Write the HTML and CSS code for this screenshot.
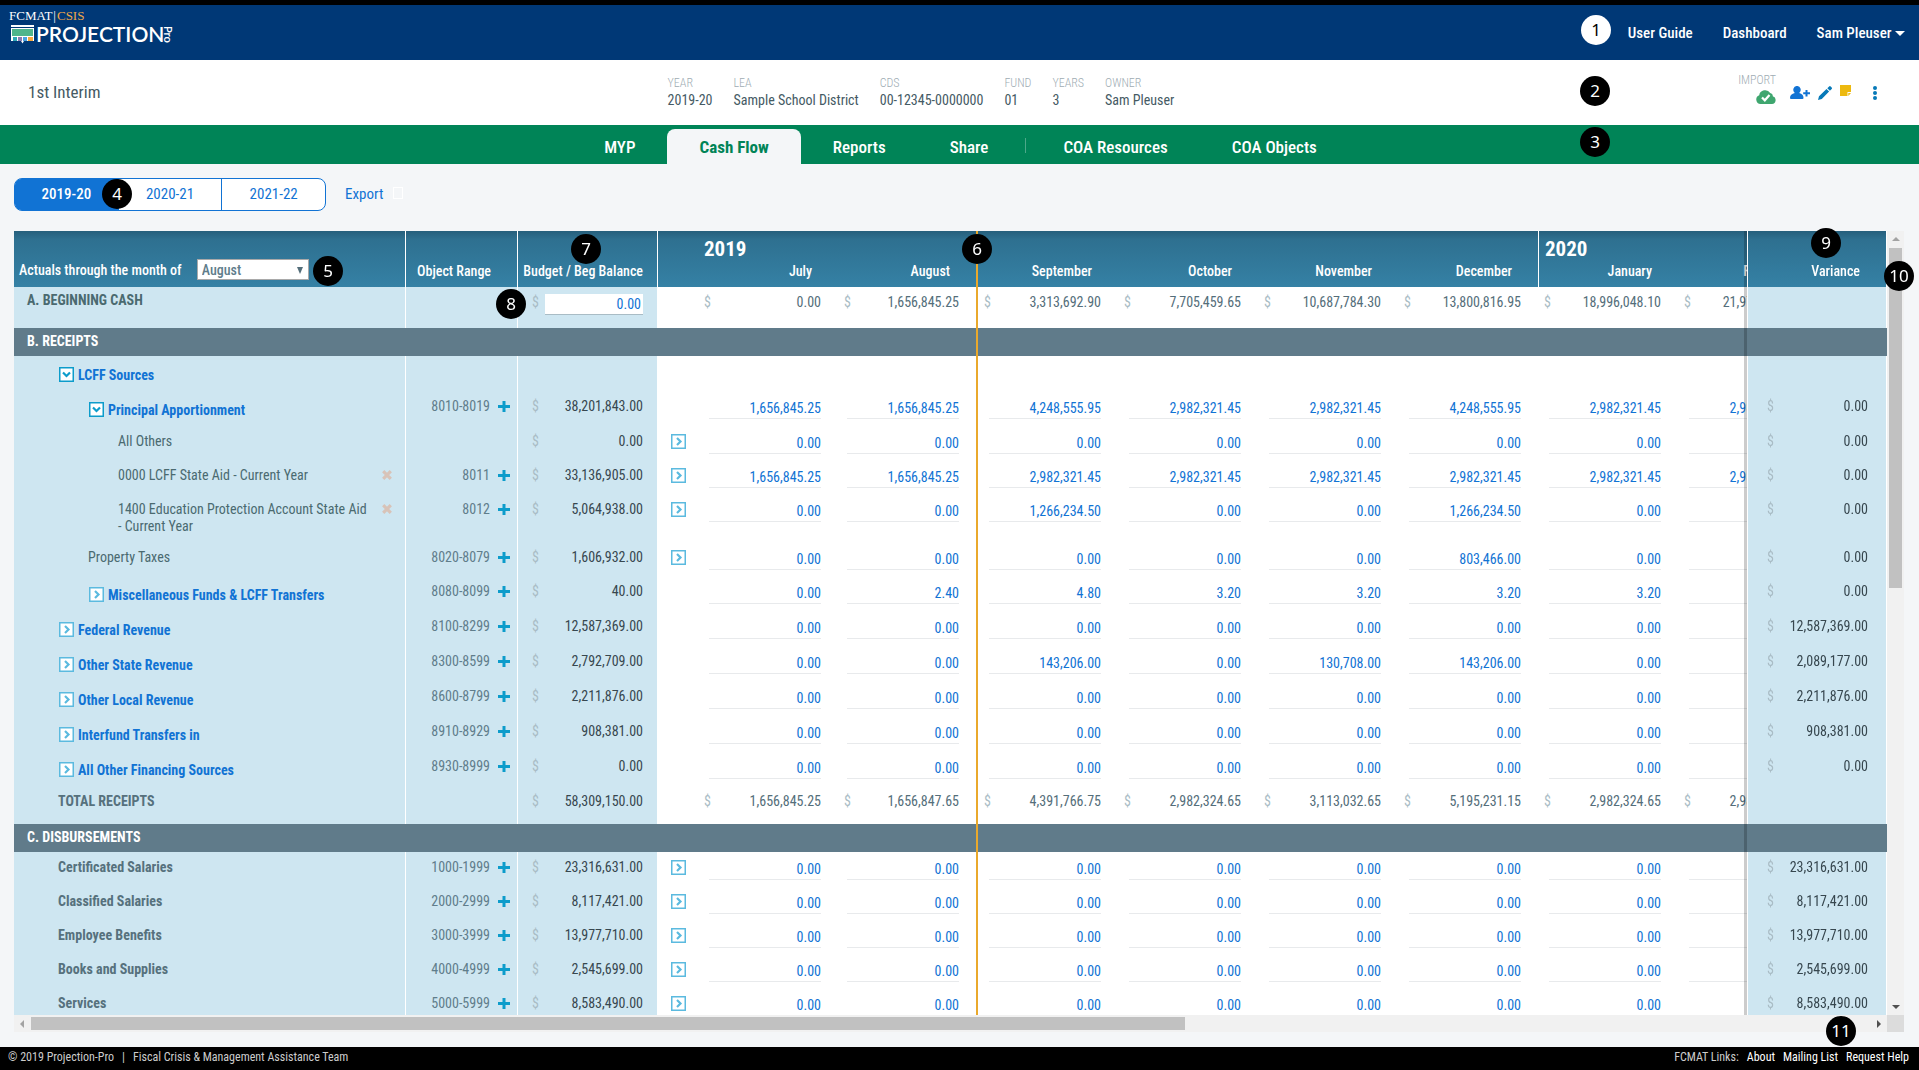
FILE: index.html
```html
<!DOCTYPE html>
<html lang="en">
<head>
    <meta charset="UTF-8">
    <meta name="viewport" content="width=device-width, initial-scale=1.0">
    <title>Projection-Pro - Cash Flow</title>

    <link rel="stylesheet" href="styles.css">
</head>
<body>
    <header class="topbar">
        <a href="#" class="logo">
            <span class="logo-org">FCMAT<span class="logo-bar">|</span><span class="logo-csis">CSIS</span></span>
            <span class="logo-name">
                <svg width="23" height="19" viewBox="0 0 23 19">
                    <path fill="#fff" d="M0 0h23v2H0zM0 3h23v13H13l-1.500 2.500L10 16H0z"/>
                    <path fill="#4fb58b" d="M1 4h21v7H1z"/>
                    <path fill="#2fa8b5" d="M2 12h4v4H2z"/>
                    <path fill="#8d7bb0" d="M7 12h4v4H7z"/>
                    <path fill="#4aa3e0" d="M12 12h4v4h-4z"/>
                    <path fill="#f6a83c" d="M17 12h5v4h-5z"/>
                </svg>
                <span class="logo-word">PROJECTION</span><span class="logo-pro">Pro</span>
            </span>
        </a>
        <nav class="top-links">
            <span class="badge badge-light badge-1">1</span>
            <a href="#">User Guide</a>
            <a href="#">Dashboard</a>
            <a href="#">Sam Pleuser <span class="caret"></span></a>
        </nav>
    </header>

    <section class="info">
        <h1>1st Interim</h1>
        <dl class="facts">
            <div><dt>YEAR</dt><dd>2019-20</dd></div>
            <div><dt>LEA</dt><dd>Sample School District</dd></div>
            <div><dt>CDS</dt><dd>00-12345-0000000</dd></div>
            <div><dt>FUND</dt><dd>01</dd></div>
            <div><dt>YEARS</dt><dd>3</dd></div>
            <div><dt>OWNER</dt><dd>Sam Pleuser</dd></div>
        </dl>
        <div class="actions">
            <div class="import">
                <span>IMPORT</span>
                <svg width="20" height="14" viewBox="0 0 20 14">
                    <path fill="#3fa66f" d="M4.500 14A4.500 4.500 0 0 1 3.200 5.300 6 6 0 0 1 14.200 3 3 3 0 0 1 16.800 6.200 4 4 0 0 1 16 14z"/>
                    <path fill="none" stroke="#fff" stroke-width="2.200" d="M6 7.500l2.800 2.800L13.500 5"/>
                </svg>
            </div>
            <button type="button" class="icon" aria-label="Share with user">
                <svg width="20" height="13" viewBox="0 0 20 13">
                    <path fill="#1173d4" d="M7 0a3.500 3.800 0 0 1 2.200 6.900C12 7.500 13.500 9 13.500 12q0 1-1 1H1q-1 0-1-1c0-3 1.800-4.500 4.800-5.100A3.500 3.800 0 0 1 7 0zM15.500 4h2v2.200H20v2h-2.500v2.300h-2V8.200h-2.300v-2h2.300z"/>
                </svg>
            </button>
            <button type="button" class="icon" aria-label="Edit">
                <svg width="14" height="14" viewBox="0 0 14 14">
                    <path fill="#0779b8" d="M8.500 3l2.600 2.600L3.800 13 0 14l1-3.700zM9.300 2.200l1.800-1.800q.8-.7 1.600 0l1 1q.6.800 0 1.600l-1.800 1.800z"/>
                </svg>
            </button>
            <button type="button" class="icon note" aria-label="Notes">
                <svg width="11" height="11" viewBox="0 0 11 11">
                    <path fill="#edb90f" d="M0 0h11v7H7.500v4H0zM8.300 8H11l-2.700 3z"/>
                </svg>
            </button>
            <button type="button" class="icon more" aria-label="More">
                <svg width="4" height="14" viewBox="0 0 4 14">
                    <g fill="#0779b8"><circle cx="2" cy="2" r="2"/><circle cx="2" cy="7" r="2"/><circle cx="2" cy="12" r="2"/></g>
                </svg>
            </button>
        </div>
        <span class="badge badge-2">2</span>
    </section>

    <nav class="tabs">
        <a href="#">MYP</a>
        <a href="#" class="active">Cash Flow</a>
        <a href="#">Reports</a>
        <a href="#">Share</a>
        <span class="tab-divider"></span>
        <a href="#">COA Resources</a>
        <a href="#">COA Objects</a>
        <span class="badge badge-3">3</span>
    </nav>

    <div class="toolbar">
        <div class="years">
            <button type="button" class="selected">2019-20</button>
            <button type="button">2020-21</button>
            <button type="button">2021-22</button>
            <span class="badge badge-4">4</span>
        </div>
        <a href="#" class="export">Export</a>
    </div>

    <main class="sheet">
        <div class="grid">
            <table>
                <colgroup>
                    <col class="col-name"><col class="col-range"><col class="col-budget"><col class="col-expand">
                    <col span="8" class="col-amount"><col class="col-amount">
                </colgroup>
                <thead>
                    <tr>
                        <th class="month-picker">
                            <label for="actuals-month">Actuals through the month of</label>
                            <span class="select">
                                <select id="actuals-month"><option>August</option></select>
                            </span>
                        </th>
                        <th class="range">Object Range</th>
                        <th class="budget">Budget / Beg Balance</th>
                        <th></th>
                        <th class="month"><strong>2019</strong>July</th>
                        <th class="month actuals-end">August</th>
                        <th class="month">September</th>
                        <th class="month">October</th>
                        <th class="month">November</th>
                        <th class="month">December</th>
                        <th class="month new-year"><strong>2020</strong>January</th>
                        <th class="month">February</th>
                        <th class="variance">Variance</th>
                    </tr>
                </thead>
                <tbody id="rows"></tbody>
            </table>
        </div>
        <div class="vscroll"><i class="arrow up"></i><div class="thumb"></div><i class="arrow down"></i></div>
        <div class="hscroll"><i class="arrow left"></i><div class="thumb"></div><i class="arrow right"></i></div>
        <div class="corner"></div>
        <span class="badge badge-5">5</span>
        <span class="badge badge-6">6</span>
        <span class="badge badge-7">7</span>
        <span class="badge badge-8">8</span>
        <span class="badge badge-9">9</span>
        <span class="badge badge-10">10</span>
        <span class="badge badge-11">11</span>
    </main>

    <footer>
        <span>© 2019 Projection-Pro</span>
        <span class="pipe">|</span>
        <span>Fiscal Crisis &amp; Management Assistance Team</span>
        <nav>
            <span>FCMAT Links:</span>
            <a href="#">About</a>
            <a href="#">Mailing List</a>
            <a href="#">Request Help</a>
        </nav>
    </footer>

    <script src="script.js"></script>
</body>
</html>
```
FILE: styles.css
```css
* {
    box-sizing: border-box;
}

body {
    display: flex;
    flex-direction: column;
    height: 100vh;
    margin: 0;
    border-top: 5px solid #000;
    background: #f4f6f8;
    color: #455a64;
    font-family: "Roboto Condensed", Roboto, sans-serif;
    font-size: 14px;
    line-height: 17px;
}

a {
    color: inherit;
    text-decoration: none;
}

button,
input,
select {
    font: inherit;
}

button {
    padding: 0;
    border: none;
    background: none;
    cursor: pointer;
}

/* top bar */
.topbar {
    display: flex;
    justify-content: space-between;
    height: 55px;
    padding: 3px 14px 0 9px;
    background: #003876;
    color: #fff;
}

.logo-org {
    display: block;
    height: 15px;
    font: 13px/16px "Liberation Serif", serif;
}

.logo-bar {
    margin: 0 1px;
}

.logo-csis {
    color: #f0a848;
}

.logo-name {
    display: flex;
    align-items: center;
    height: 22px;
    padding-left: 2px;
}

.logo-word {
    margin-left: 2px;
    font: 600 21px/22px Lato, sans-serif;
}

.logo-pro {
    font: 600 11px/9px Lato, sans-serif;
    writing-mode: vertical-rl;
}

.top-links {
    position: relative;
    display: flex;
    align-items: center;
    gap: 30px;
    padding-bottom: 2px;
    font-size: 15px;
    font-weight: 500;
}

.caret {
    display: inline-block;
    border: 5px solid transparent;
    border-top: 5px solid #fff;
    border-bottom: none;
    vertical-align: 2px;
}

/* projection info */
.info {
    position: relative;
    display: flex;
    align-items: center;
    height: 65px;
    padding: 0 42px 0 28px;
    background: #fff;
}

.info h1 {
    flex: 0 0 33.33vw;
    margin: 0;
    font-size: 17px;
    font-weight: 400;
}

.facts {
    display: flex;
    gap: 21px;
    margin: 0;
    padding-bottom: 2px;
}

.facts dt,
.import {
    color: #9eacb3;
    font-size: 12px;
    font-weight: 300;
}

.facts dd {
    margin: 0;
}

.actions {
    flex: 1;
    display: flex;
    justify-content: flex-end;
    align-items: center;
}

.import {
    display: flex;
    flex-direction: column;
    align-items: flex-end;
    gap: 1px;
    padding-bottom: 9px;
}

.icon {
    display: flex;
    margin-left: 14px;
}

.icon + .icon {
    margin-left: 8px;
}

.icon.note {
    padding-bottom: 5px;
}

.icon.more {
    margin-left: 22px;
}

/* tabs */
.tabs {
    position: relative;
    display: flex;
    justify-content: center;
    align-items: flex-end;
    height: 39px;
    padding-left: 2px;
    background: #008457;
    color: #fff;
    font-size: 17px;
    font-weight: 500;
}

.tabs a {
    height: 35px;
    padding: 0 32px;
    line-height: 36px;
}

.tabs .active {
    border-radius: 8px 8px 0 0;
    background: #f4f6f8;
    color: #008457;
    font-weight: 700;
}

.tab-divider {
    width: 1px;
    height: 15px;
    margin: 0 5px 11px;
    background: #4da889;
}

/* year switcher */
.toolbar {
    display: flex;
    align-items: center;
    gap: 19px;
    height: 67px;
    padding: 0 14px 6px;
    color: #1173d4;
    font-size: 15px;
}

.years {
    position: relative;
    display: flex;
    width: 312px;
    height: 33px;
    border: 1px solid #1173d4;
    border-radius: 8px;
    background: #fff;
}

.years button {
    flex: 1;
    color: #1173d4;
}

.years button + button {
    border-left: 1px solid #1173d4;
}

.years .selected {
    border-radius: 6px 0 0 6px;
    background: #1173d4;
    color: #fff;
    font-weight: 500;
}

.export::after {
    content: "";
    display: inline-block;
    width: 8px;
    height: 10px;
    margin-left: 10px;
    border: 1px solid #fff;
}

/* cash flow table */
.sheet {
    position: relative;
    flex: 1;
    display: grid;
    grid-template-columns: minmax(0, 1fr) 17px;
    grid-template-rows: minmax(0, 1fr) 17px;
    min-height: 0;
    margin: 0 15px 15px 14px;
}

.grid {
    overflow: hidden;
    background: #fff;
}

table {
    width: 1944px;
    border-spacing: 0;
    table-layout: fixed;
}

.col-name {
    width: 391px;
}

.col-range {
    width: 112px;
}

.col-budget {
    width: 141px;
}

.col-expand {
    width: 40px;
}

.col-amount {
    width: 140px;
}

th {
    height: 56px;
    padding: 0 26px 7px 6px;
    background: linear-gradient(#265f7c, #2e7090 15%, #3581a5);
    color: #fff;
    font-weight: 500;
    text-align: right;
    vertical-align: bottom;
}

th strong {
    display: block;
    padding-bottom: 3px;
    font-size: 21px;
    line-height: 21px;
    text-align: left;
}

th.month-picker {
    padding: 0 0 7px 5px;
    text-align: left;
}

.select {
    position: relative;
    margin-left: 12px;
}

.select::after {
    content: "";
    position: absolute;
    right: 6px;
    top: 5px;
    border: 3px solid transparent;
    border-top: 7px solid #546e7a;
    border-bottom: none;
}

select {
    width: 112px;
    height: 21px;
    padding: 0 4px;
    border: 1px solid #a9a9a9;
    border-radius: 0;
    background: #fff;
    color: #607d8b;
    line-height: 18px;
    appearance: none;
}

td {
    height: 34px;
    padding: 7px 17px 0 6px;
    vertical-align: top;
}

.toggle-row td {
    height: 35px;
}

.two-line td {
    height: 48px;
}

.cash-row td {
    height: 41px;
}

.total-row td {
    height: 38px;
}

.section td {
    height: 28px;
    padding: 5px 13px 0;
    background: #607b8a;
    color: #fff;
    font-weight: 700;
}

.name,
td.range,
td.budget,
td.variance {
    background: #cee6f1;
}

.range,
.budget {
    border-left: 1px solid #fff;
}

.name {
    display: flex;
    gap: 4px;
    padding-right: 13px;
    color: #4a6a70;
}

.name span {
    flex: 1;
    padding-right: 10px;
}

.cash-row .name {
    padding-top: 5px;
}

.level-0 {
    padding-left: 13px;
}

.level-1 {
    padding-left: 44px;
}

.level-2 {
    padding-left: 74px;
}

.level-3 {
    padding-left: 104px;
}

.toggle-row .name {
    padding-top: 11px;
    color: #1173d4;
}

.toggle-row .level-1 {
    padding-left: 45px;
}

.toggle-row .level-2 {
    padding-left: 75px;
}

.total-row .name,
.heavy .name {
    color: #56717d;
}

.remove,
.add {
    display: flex;
    align-items: center;
    height: 16px;
}

.toggle {
    display: flex;
    width: 15px;
    height: 15px;
}

td.range {
    padding-right: 7px;
    color: #607d8b;
}

th.range {
    padding-right: 26px;
}

td.range div {
    display: flex;
    justify-content: flex-end;
    gap: 8px;
}

.budget {
    border-right: 1px solid #fff;
}

td.budget {
    padding-right: 14px;
    padding-left: 14px;
}

th.budget {
    padding-right: 14px;
    padding-left: 0;
}

td.expand {
    padding-top: 8px;
    padding-left: 13px;
}

.money {
    display: flex;
    justify-content: space-between;
    color: #546e7a;
}

.money i {
    color: #a9bcc5;
    font-style: normal;
}

td.budget .money,
td.variance .money {
    color: #37474f;
}

td input {
    display: block;
    width: 100%;
    height: 21px;
    margin: 0;
    padding: 0;
    border: none;
    border-bottom: 1px solid #e8eaec;
    border-radius: 0;
    background: none;
    color: #1173d4;
    text-align: right;
}

.money input {
    width: 98px;
    padding-right: 2px;
    border-color: #a9bcc5;
    background: #fff;
}

.month.entry {
    padding-left: 11px;
}

/* line between actual and projected months */
.actuals-end {
    border-right: 2px solid #eaa92c;
}

.month.actuals-end.entry {
    padding-left: 9px;
}

.new-year {
    border-left: 1px solid #fff;
}

.variance {
    position: sticky;
    right: 0;
    border-right: 1px solid #fff;
    border-left: 1px solid #fff;
    box-shadow: -3px 0 0 rgba(0, 0, 0, 0.2);
}

.section .variance {
    border-color: #607b8a;
    background: #607b8a;
}

td.variance {
    padding-right: 18px;
    padding-left: 19px;
}

/* scrollbars */
.vscroll,
.hscroll {
    display: flex;
    align-items: center;
    background: #f1f1f1;
}

.vscroll {
    flex-direction: column;
    gap: 7px;
    padding: 6px 0;
}

.vscroll .thumb {
    width: 13px;
    height: 44%;
    margin-bottom: auto;
    background: #c1c1c1;
}

.hscroll {
    gap: 7px;
    padding: 0 6px;
}

.hscroll .thumb {
    width: 62%;
    height: 13px;
    margin-right: auto;
    background: #c1c1c1;
}

.arrow {
    border: 4px solid transparent;
}

.up {
    border-top: none;
    border-bottom-color: #a3a3a3;
}

.down {
    border-bottom: none;
    border-top-color: #505050;
}

.left {
    border-left: none;
    border-right-color: #a3a3a3;
}

.right {
    border-right: none;
    border-left-color: #505050;
}

.corner {
    background: #dcdcdc;
}

/* numbered callouts */
.badge {
    position: absolute;
    width: 30px;
    height: 30px;
    border-radius: 50%;
    background: #000;
    color: #fff;
    font: 17px/30px "Noto Sans", sans-serif;
    text-align: center;
}

.badge-light {
    background: #fff;
    color: #000;
}

.badge-1 {
    top: 7px;
    right: 294px;
}

.badge-2 {
    top: 16px;
    right: 309px;
}

.badge-3 {
    top: 2px;
    right: 309px;
}

.badge-4 {
    top: 0;
    left: 87px;
}

.badge-5 {
    top: 25px;
    left: 299px;
}

.badge-6 {
    top: 3px;
    left: 948px;
}

.badge-7 {
    top: 3px;
    left: 557px;
}

.badge-8 {
    top: 58px;
    left: 482px;
}

.badge-9 {
    top: -3px;
    right: 63px;
}

.badge-10 {
    top: 30px;
    right: -10px;
}

.badge-11 {
    right: 48px;
    bottom: -14px;
}

/* footer */
footer {
    display: flex;
    height: 23px;
    padding: 0 10px 0 8px;
    background: #000;
    color: #ccc;
    font-size: 12px;
    line-height: 20px;
}

.pipe {
    margin: 0 8px;
}

footer nav {
    display: flex;
    gap: 8px;
    margin-left: auto;
}

footer a {
    color: #fff;
}
```
FILE: script.js
```js
// name, level, object range, budget, eight months, variance
const zeros = ['0.00', '0.00', '0.00', '0.00', '0.00', '0.00', '0.00', '0.00'];
const rows = [
    { type: 'cash', name: 'A. BEGINNING CASH', level: 0, months: ['0.00', '1,656,845.25', '3,313,692.90', '7,705,459.65', '10,687,784.30', '13,800,816.95', '18,996,048.10', '21,978,372.75'] },
    { type: 'section', name: 'B. RECEIPTS' },
    { type: 'toggle', open: true, name: 'LCFF Sources', level: 1 },
    { type: 'toggle', open: true, name: 'Principal Apportionment', level: 2, range: '8010-8019', budget: '38,201,843.00', variance: '0.00',
        months: ['1,656,845.25', '1,656,845.25', '4,248,555.95', '2,982,321.45', '2,982,321.45', '4,248,555.95', '2,982,321.45', '2,982,321.45'] },
    { name: 'All Others', level: 3, budget: '0.00', variance: '0.00', months: zeros, expand: true },
    { name: '0000 LCFF State Aid - Current Year', level: 3, remove: true, range: '8011', budget: '33,136,905.00', variance: '0.00', expand: true,
        months: ['1,656,845.25', '1,656,845.25', '2,982,321.45', '2,982,321.45', '2,982,321.45', '2,982,321.45', '2,982,321.45', '2,982,321.45'] },
    { type: 'two-line', name: '1400 Education Protection Account State Aid - Current Year', level: 3, remove: true, range: '8012', budget: '5,064,938.00', variance: '0.00', expand: true,
        months: ['0.00', '0.00', '1,266,234.50', '0.00', '0.00', '1,266,234.50', '0.00', '0.00'] },
    { name: 'Property Taxes', level: 2, range: '8020-8079', budget: '1,606,932.00', variance: '0.00', expand: true,
        months: ['0.00', '0.00', '0.00', '0.00', '0.00', '803,466.00', '0.00', '0.00'] },
    { type: 'toggle', name: 'Miscellaneous Funds & LCFF Transfers', level: 2, range: '8080-8099', budget: '40.00', variance: '0.00',
        months: ['0.00', '2.40', '4.80', '3.20', '3.20', '3.20', '3.20', '3.20'] },
    { type: 'toggle', name: 'Federal Revenue', level: 1, range: '8100-8299', budget: '12,587,369.00', variance: '12,587,369.00', months: zeros },
    { type: 'toggle', name: 'Other State Revenue', level: 1, range: '8300-8599', budget: '2,792,709.00', variance: '2,089,177.00',
        months: ['0.00', '0.00', '143,206.00', '0.00', '130,708.00', '143,206.00', '0.00', '0.00'] },
    { type: 'toggle', name: 'Other Local Revenue', level: 1, range: '8600-8799', budget: '2,211,876.00', variance: '2,211,876.00', months: zeros },
    { type: 'toggle', name: 'Interfund Transfers in', level: 1, range: '8910-8929', budget: '908,381.00', variance: '908,381.00', months: zeros },
    { type: 'toggle', name: 'All Other Financing Sources', level: 1, range: '8930-8999', budget: '0.00', variance: '0.00', months: zeros },
    { type: 'total', name: 'TOTAL RECEIPTS', level: 1, budget: '58,309,150.00',
        months: ['1,656,845.25', '1,656,847.65', '4,391,766.75', '2,982,324.65', '3,113,032.65', '5,195,231.15', '2,982,324.65', '2,982,324.65'] },
    { type: 'section', name: 'C. DISBURSEMENTS' },
    { type: 'heavy', name: 'Certificated Salaries', level: 1, range: '1000-1999', budget: '23,316,631.00', variance: '23,316,631.00', months: zeros, expand: true },
    { type: 'heavy', name: 'Classified Salaries', level: 1, range: '2000-2999', budget: '8,117,421.00', variance: '8,117,421.00', months: zeros, expand: true },
    { type: 'heavy', name: 'Employee Benefits', level: 1, range: '3000-3999', budget: '13,977,710.00', variance: '13,977,710.00', months: zeros, expand: true },
    { type: 'heavy', name: 'Books and Supplies', level: 1, range: '4000-4999', budget: '2,545,699.00', variance: '2,545,699.00', months: zeros, expand: true },
    { type: 'heavy', name: 'Services', level: 1, range: '5000-5999', budget: '8,583,490.00', variance: '8,583,490.00', months: zeros, expand: true }
];

const monthNames = ['July', 'August', 'September', 'October', 'November', 'December', 'January', 'February'];
const rowClass = { cash: 'cash-row', toggle: 'toggle-row', total: 'total-row', 'two-line': 'two-line', section: 'section', heavy: 'heavy' };

function toggleButton(open, label) {
    const color = open ? '#0c9ccb' : '#5bbadf';
    const arrow = open ? 'M4 5.500l3.500 3.500L11 5.500' : 'M6 4l3.500 3.500L6 11';
    return `<button type="button" class="toggle" aria-label="Expand ${label}"><svg width="15" height="15" viewBox="0 0 15 15">
        <path fill="#fff" stroke="${color}" stroke-width="1.500" d="M.75.75h13.500v13.500H.75z"/>
        <path fill="none" stroke="${color}" stroke-width="2.200" d="${arrow}"/></svg></button>`;
}

function money(value) {
    return value ? `<div class="money"><i>$</i>${value}</div>` : '';
}

function nameCell(row) {
    const label = row.name.replace('&', '&amp;');
    const bold = row.type && row.type !== 'two-line';
    return (row.type === 'toggle' ? toggleButton(row.open, label) : '')
        + `<span>${bold ? `<b>${label}</b>` : label}</span>`
        + (row.remove ? `<button type="button" class="remove" aria-label="Remove ${label}"><svg width="10" height="10" viewBox="0 0 10 10">
            <path stroke="#d8c3b8" stroke-width="3.200" d="M1.200 1.200l7.600 7.600M8.800 1.200L1.200 8.800"/></svg></button>` : '');
}

function rangeCell(row) {
    if (!row.range) return '';
    return `<div>${row.range}<button type="button" class="add" aria-label="Add to ${row.range}"><svg width="12" height="11" viewBox="0 0 12 11">
        <path stroke="#0c9ccb" stroke-width="3" d="M6 0v11M0 5.500h12"/></svg></button></div>`;
}

function budgetCell(row) {
    if (row.type === 'cash') {
        return '<div class="money"><i>$</i><input type="text" value="0.00" aria-label="Beginning cash"></div>';
    }
    return money(row.budget);
}

function monthCell(row, i) {
    const end = i === 1 ? ' actuals-end' : '';
    if (!row.months) return `<td class="month${end}"></td>`;
    if (row.type === 'cash' || row.type === 'total') {
        return `<td class="month${end}">${money(row.months[i])}</td>`;
    }
    return `<td class="month entry${end}"><input type="text" value="${row.months[i]}" aria-label="${row.name.replace('&', '&amp;')}, ${monthNames[i]}"></td>`;
}

document.getElementById('rows').innerHTML = rows.map(row => {
    const months = monthNames.map((m, i) => monthCell(row, i)).join('');
    if (row.type === 'section') {
        return `<tr class="section"><td colspan="4">${row.name}</td>${months}<td class="variance"></td></tr>`;
    }
    return `<tr class="${rowClass[row.type] || ''}">
        <td class="name level-${row.level}">${nameCell(row)}</td>
        <td class="range">${rangeCell(row)}</td>
        <td class="budget">${budgetCell(row)}</td>
        <td class="expand">${row.expand ? toggleButton(false, row.name) : ''}</td>
        ${months}
        <td class="variance">${money(row.variance)}</td>
    </tr>`;
}).join('');
```
